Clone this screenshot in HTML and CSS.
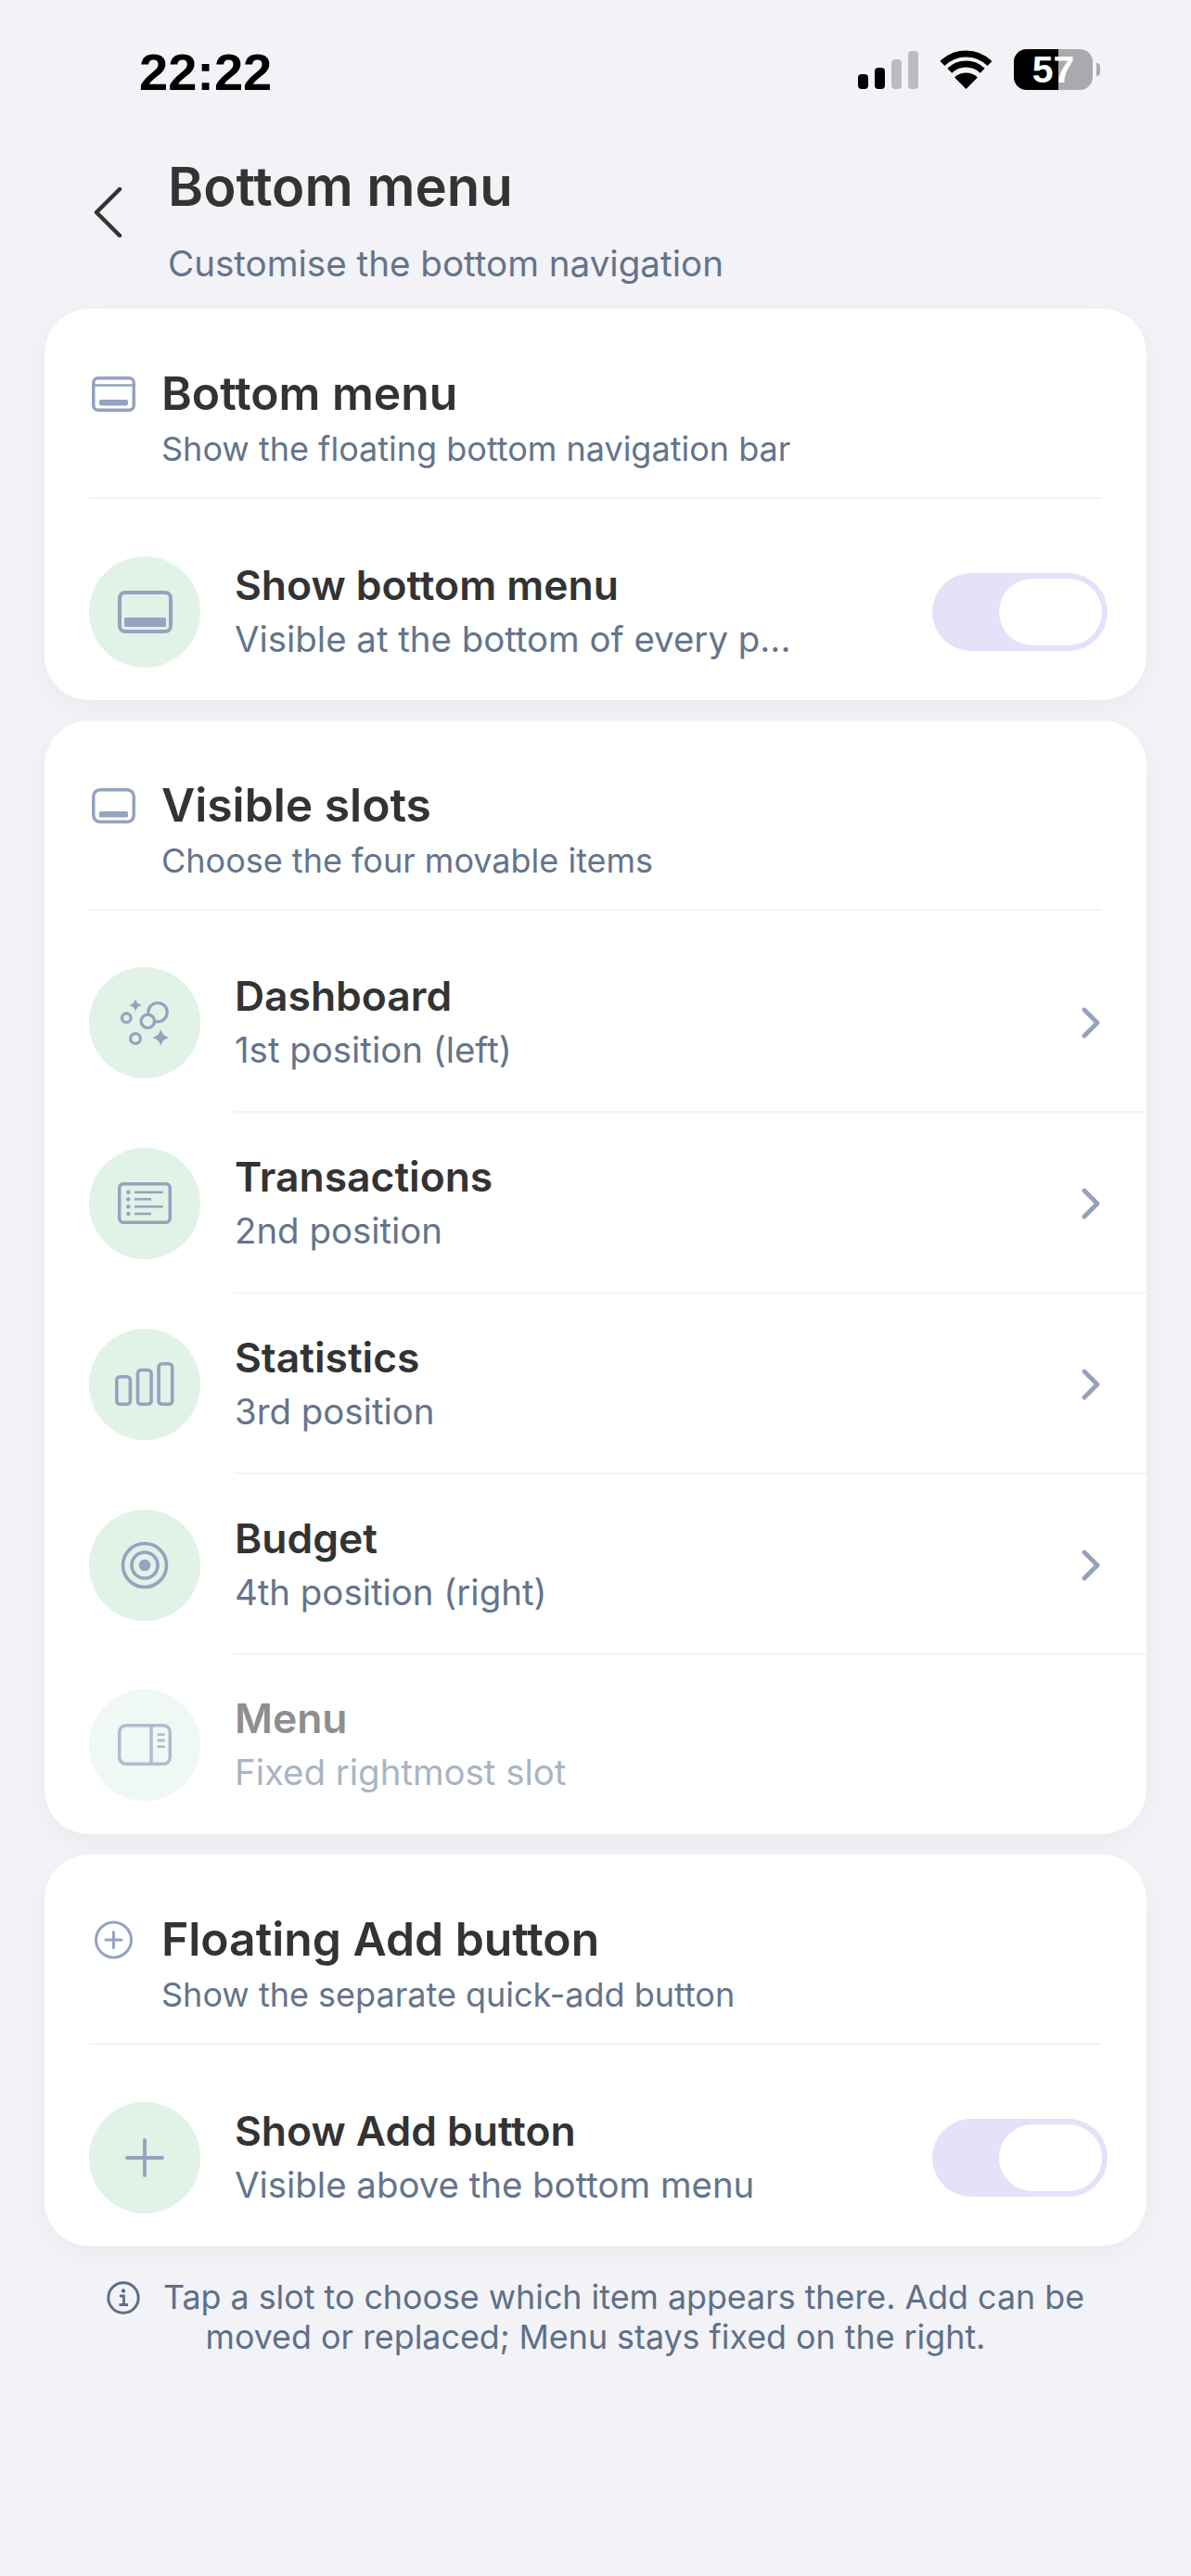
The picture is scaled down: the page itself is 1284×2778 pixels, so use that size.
FILE: index.html
```html
<!DOCTYPE html>
<html lang="en">
<head>
<meta charset="utf-8">
<title>Bottom menu</title>
<link rel="stylesheet" href="styles.css">
</head>
<body>
<div class="status">
  <span class="time">22:22</span>
  <div class="status-icons">
    <svg class="signal" width="65" height="42" viewBox="0 0 65 42"><rect x="0" y="26" width="11" height="16" rx="4" fill="#000"/><rect x="18" y="19" width="11" height="23" rx="4" fill="#000"/><rect x="36" y="10" width="11" height="32" rx="4" fill="#bcbcc0"/><rect x="54" y="1" width="11" height="41" rx="4" fill="#bcbcc0"/></svg>
    <svg class="wifi" width="57" height="42" viewBox="0 0 57 42"><path d="M3 14.5A36 36 0 0 1 54 14.5" fill="none" stroke="#000" stroke-width="7"/><path d="M10.8 22.3A25 25 0 0 1 46.2 22.3" fill="none" stroke="#000" stroke-width="7"/><path d="M16.1 29.6A17.5 17.5 0 0 1 40.9 29.6L28.5 42Z" fill="#000"/></svg>
    <div class="battery"><div class="battery-body"><div class="battery-fill"></div><span class="battery-num">57</span></div><div class="battery-tip"></div></div>
  </div>
</div>

<header class="nav">
  <svg class="back" width="32" height="54" viewBox="0 0 32 54"><path d="M29 2L4 27L29 52" fill="none" stroke="#333" stroke-width="4.5" stroke-linecap="round" stroke-linejoin="round"/></svg>
  <div class="nav-text">
    <h1 class="nav-title">Bottom menu</h1>
    <p class="nav-sub">Customise the bottom navigation</p>
  </div>
</header>

<main class="cards">
  <section class="card">
    <div class="card-head">
      <svg class="head-icon" width="47" height="38" viewBox="0 0 47 38"><rect x="1.75" y="1.75" width="43.5" height="34.5" rx="5" fill="none" stroke="#94a3bf" stroke-width="3.5"/><path d="M2 9.5H45" stroke="#94a3bf" stroke-width="2.6"/><rect x="8" y="25" width="31" height="6.5" rx="2" fill="#94a3bf"/></svg>
      <div>
        <h2 class="card-title">Bottom menu</h2>
        <p class="card-sub">Show the floating bottom navigation bar</p>
      </div>
    </div>
    <div class="rows">
      <div class="row row-single">
        <div class="badge"><svg width="59" height="46" viewBox="0 0 59 46"><rect x="2" y="2" width="55" height="42" rx="6" fill="none" stroke="#94a3bf" stroke-width="4"/><rect x="7" y="29" width="45" height="10" rx="1.5" fill="#94a3bf"/></svg></div>
        <div class="row-text">
          <div class="row-title">Show bottom menu</div>
          <div class="row-sub">Visible at the bottom of every p...</div>
        </div>
        <div class="toggle"><div class="knob"></div></div>
      </div>
    </div>
  </section>

  <section class="card">
    <div class="card-head">
      <svg class="head-icon" width="47" height="38" viewBox="0 0 47 38"><rect x="1.75" y="1.75" width="43.5" height="34.5" rx="7" fill="none" stroke="#94a3bf" stroke-width="3.5"/><rect x="8" y="25" width="31" height="6.5" rx="1.5" fill="#94a3bf"/></svg>
      <div>
        <h2 class="card-title">Visible slots</h2>
        <p class="card-sub">Choose the four movable items</p>
      </div>
    </div>
    <div class="rows">
      <div class="row">
        <div class="badge"><svg width="53" height="51" viewBox="0 0 53 51" fill="none" stroke="#94a3bf" stroke-width="3.2"><circle cx="6.3" cy="20.7" r="4.8"/><circle cx="40" cy="14.7" r="10.2"/><circle cx="29.3" cy="24.3" r="7.2" fill="#e1f2e6"/><circle cx="16" cy="43" r="5.4"/><path d="M16 0.3Q17.3 5.7 22.7 7Q17.3 8.3 16 13.7Q14.7 8.3 9.3 7Q14.7 5.7 16 0.3Z" fill="#94a3bf" stroke="none"/><path d="M43.3 33Q45 40.3 52.3 42Q45 43.7 43.3 51Q41.6 43.7 34.3 42Q41.6 40.3 43.3 33Z" fill="#94a3bf" stroke="none"/></svg></div>
        <div class="row-text">
          <div class="row-title">Dashboard</div>
          <div class="row-sub">1st position (left)</div>
        </div>
        <svg class="chev" width="20" height="34" viewBox="0 0 20 34"><path d="M3 3L17 17L3 31" fill="none" stroke="#94a3b8" stroke-width="4.8" stroke-linecap="round" stroke-linejoin="round"/></svg>
      </div>
      <div class="row">
        <div class="badge"><svg width="58" height="45" viewBox="0 0 58 45" fill="none" stroke="#94a3bf"><rect x="1.75" y="1.75" width="54.5" height="41.5" rx="4" stroke-width="3.5"/><g fill="#94a3bf" stroke="none"><circle cx="11.3" cy="10.7" r="2.2"/><circle cx="11.3" cy="18.3" r="2.2"/><circle cx="11.3" cy="26.3" r="2.2"/><circle cx="11.3" cy="34" r="2.2"/></g><path d="M18 10.7H48.7M18 18.3H36M18 26.3H48.7M18 34H36" stroke-width="2.6"/></svg></div>
        <div class="row-text">
          <div class="row-title">Transactions</div>
          <div class="row-sub">2nd position</div>
        </div>
        <svg class="chev" width="20" height="34" viewBox="0 0 20 34"><path d="M3 3L17 17L3 31" fill="none" stroke="#94a3b8" stroke-width="4.8" stroke-linecap="round" stroke-linejoin="round"/></svg>
      </div>
      <div class="row">
        <div class="badge"><svg width="64" height="47" viewBox="0 0 64 47" fill="none" stroke="#94a3bf" stroke-width="3.6"><rect x="1.8" y="15.8" width="14.6" height="29.4" rx="3.5"/><rect x="24.5" y="8.5" width="14.6" height="36.7" rx="3.5"/><rect x="47.1" y="1.8" width="14.6" height="43.4" rx="3.5"/></svg></div>
        <div class="row-text">
          <div class="row-title">Statistics</div>
          <div class="row-sub">3rd position</div>
        </div>
        <svg class="chev" width="20" height="34" viewBox="0 0 20 34"><path d="M3 3L17 17L3 31" fill="none" stroke="#94a3b8" stroke-width="4.8" stroke-linecap="round" stroke-linejoin="round"/></svg>
      </div>
      <div class="row">
        <div class="badge"><svg width="52" height="52" viewBox="0 0 52 52" fill="none" stroke="#94a3bf" stroke-width="3.6"><circle cx="26" cy="26" r="23.5"/><circle cx="26" cy="26" r="14"/><circle cx="26" cy="26" r="6.3" fill="#94a3bf" stroke="none"/></svg></div>
        <div class="row-text">
          <div class="row-title">Budget</div>
          <div class="row-sub">4th position (right)</div>
        </div>
        <svg class="chev" width="20" height="34" viewBox="0 0 20 34"><path d="M3 3L17 17L3 31" fill="none" stroke="#94a3b8" stroke-width="4.8" stroke-linecap="round" stroke-linejoin="round"/></svg>
      </div>
      <div class="row row-last row-dim">
        <div class="badge"><svg width="58" height="45" viewBox="0 0 58 45" fill="none" stroke="#94a3bf"><rect x="1.75" y="1.75" width="54.5" height="41.5" rx="7" stroke-width="3.5"/><path d="M36 2V43" stroke-width="3.5"/><path d="M42.7 11.7H50.7M42.7 18H50.7M42.7 24.7H50.7" stroke-width="2.8"/></svg></div>
        <div class="row-text">
          <div class="row-title">Menu</div>
          <div class="row-sub">Fixed rightmost slot</div>
        </div>
      </div>
    </div>
  </section>

  <section class="card">
    <div class="card-head">
      <svg class="head-icon head-icon-round" width="47" height="42" viewBox="0 0 47 42" fill="none" stroke="#94a3bf"><circle cx="23.5" cy="21" r="19" stroke-width="3"/><path d="M23.5 12.5V29.5M15 21H32" stroke-width="3" stroke-linecap="round"/></svg>
      <div>
        <h2 class="card-title">Floating Add button</h2>
        <p class="card-sub">Show the separate quick-add button</p>
      </div>
    </div>
    <div class="rows">
      <div class="row row-single">
        <div class="badge"><svg width="42" height="42" viewBox="0 0 42 42"><path d="M21 2V40M2 21H40" fill="none" stroke="#94a3bf" stroke-width="3.8" stroke-linecap="round"/></svg></div>
        <div class="row-text">
          <div class="row-title">Show Add button</div>
          <div class="row-sub">Visible above the bottom menu</div>
        </div>
        <div class="toggle"><div class="knob"></div></div>
      </div>
    </div>
  </section>
</main>

<footer class="note">
  <p class="note-line"><svg class="note-icon" width="36" height="36" viewBox="0 0 36 36" fill="none" stroke="#5d7089"><circle cx="18" cy="18" r="16.2" stroke-width="3"/><circle cx="18" cy="10.5" r="2.2" fill="#5d7089" stroke="none"/><path d="M14 16H18.5V25M13.5 25.5H23" stroke-width="2.8"/></svg>Tap a slot to choose which item appears there. Add can be</p>
  <p class="note-line">moved or replaced; Menu stays fixed on the right.</p>
</footer>
</body>
</html>
```

FILE: styles.css
```css
* { box-sizing: border-box; }
html, body { margin: 0; padding: 0; }
body {
  width: 1284px;
  height: 2778px;
  background: #f2f2f7;
  font-family: Inter, "Liberation Sans", sans-serif;
  overflow: hidden;
}
h1, h2, p { margin: 0; }

.status {
  height: 140px;
  padding: 46px 98px 0 150px;
  display: flex;
  justify-content: space-between;
  align-items: flex-start;
}
.time {
  font-family: "Liberation Sans", sans-serif;
  font-weight: 700;
  font-size: 56px;
  line-height: 64px;
  color: #000;
}
.status-icons { display: flex; align-items: center; gap: 23px; margin-top: 7px; }
.battery { display: flex; align-items: center; gap: 4px; }
.battery-body {
  position: relative;
  width: 85px;
  height: 44px;
  border-radius: 14px;
  background: #a9a9ae;
  overflow: hidden;
  display: flex;
  align-items: center;
  justify-content: center;
}
.battery-fill { position: absolute; left: 0; top: 0; bottom: 0; width: 48px; background: #000; }
.battery-num {
  position: relative;
  color: #fff;
  font-family: "Liberation Sans", sans-serif;
  font-weight: 700;
  font-size: 41px;
  line-height: 44px;
}
.battery-tip { width: 4px; height: 14px; background: #a9a9ae; border-radius: 0 7px 7px 0; }

.nav {
  height: 193px;
  padding-left: 100px;
  display: flex;
  align-items: flex-start;
  gap: 49px;
}
.back { margin-top: 62px; flex: none; }
.nav-text { padding-top: 26px; }
.nav-title {
  font-size: 58px;
  font-weight: 600;
  line-height: 70px;
  color: #333;
}
.nav-sub {
  margin-top: 25px;
  font-size: 38.6px;
  line-height: 46px;
  color: #64748b;
}

.cards { display: flex; flex-direction: column; gap: 22px; padding: 0 48px; }
.card {
  background: #fff;
  border-radius: 48px;
  box-shadow: 0 8px 28px rgba(0, 0, 0, 0.04);
  overflow: hidden;
}
.card-head {
  height: 205px;
  margin: 0 48px;
  padding-top: 61px;
  border-bottom: 2px solid #f2f3f7;
  display: flex;
  align-items: flex-start;
  gap: 28px;
}
.head-icon { flex: none; margin: 12px 0 0 3px; }
.head-icon-round { margin-top: 10px; }
.card-title { font-size: 49.8px; font-weight: 600; line-height: 60px; color: #333; }
.card-sub { margin-top: 8px; font-size: 36px; line-height: 44px; color: #64748b; }

.rows { padding-top: 23px; }
.row {
  position: relative;
  height: 195px;
  padding: 0 48px;
  display: flex;
  align-items: center;
  gap: 37px;
}
.row::after {
  content: "";
  position: absolute;
  left: 204px;
  right: 0;
  bottom: 0;
  height: 2px;
  background: #f2f3f7;
}
.row-last { height: 193px; }
.row-single { height: 194px; padding-top: 3px; }
.row-last::after, .row-single::after { display: none; }
.badge {
  flex: none;
  width: 120px;
  height: 120px;
  border-radius: 50%;
  background: #e1f2e6;
  display: flex;
  align-items: center;
  justify-content: center;
}
.row-text { flex: 1; min-width: 0; }
.row-title { font-size: 44.4px; font-weight: 600; line-height: 56px; color: #333; }
.row-sub { margin-top: 2px; font-size: 38.4px; line-height: 56px; color: #64748b; white-space: nowrap; }
.chev { flex: none; margin-right: 2px; }
.row-dim .badge { background: #eff8f2; }
.row-dim .badge svg { opacity: 0.7; }
.row-dim .row-title { color: #8e8e8e; }
.row-dim .row-sub { color: #a9b4c4; }

.toggle {
  flex: none;
  width: 189px;
  height: 84px;
  margin-right: -6px;
  padding: 6px;
  border-radius: 42px;
  background: #e6e0f8;
  display: flex;
  justify-content: flex-end;
}
.knob { width: 111px; height: 72px; border-radius: 36px; background: #fff; }

.note { padding: 34px 48px 0; text-align: center; }
.note-line { font-size: 35.8px; line-height: 43px; color: #5d7089; white-space: nowrap; }
.note-icon { vertical-align: -6px; margin-right: 25px; }
```
